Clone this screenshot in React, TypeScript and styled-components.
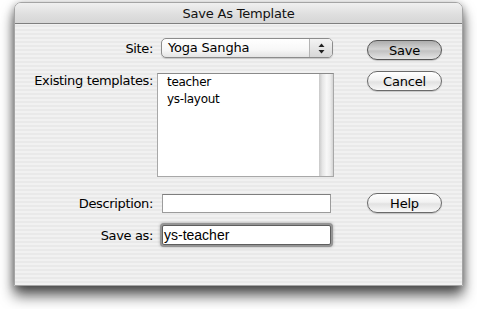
import React from "react";
import styled, { createGlobalStyle } from "styled-components";

const GlobalStyle = createGlobalStyle`
  html, body {
    margin: 0;
    padding: 0;
    background: #ffffff;
  }
  body {
    font-family: "DejaVu Sans", "Liberation Sans", sans-serif;
    color: #000000;
  }
`;

const Page = styled.div`
  width: 477px;
  height: 309px;
  padding: 2px 0 0 14px;
  box-sizing: border-box;
`;

const Window = styled.div`
  width: 449px;
  height: 284px;
  display: flex;
  flex-direction: column;
  border-radius: 7px 7px 0 0;
  border: 1px solid #a4a4a4;
  box-sizing: border-box;
  overflow: hidden;
  background: repeating-linear-gradient(
    to bottom,
    #f1f1f1 0px,
    #f1f1f1 2px,
    #e9e9e9 2px,
    #e9e9e9 4px
  );
  box-shadow: 0 10px 14px rgba(0, 0, 0, 0.62), 0 2px 8px rgba(0, 0, 0, 0.35);
`;

const TitleBar = styled.div`
  height: 20px;
  flex-shrink: 0;
  display: flex;
  align-items: center;
  justify-content: center;
  background: linear-gradient(to bottom, #f0f0f0, #dedede 60%, #d6d6d6);
  border-bottom: 1px solid #7e7e7e;
  font-size: 13px;
  letter-spacing: -0.2px;
  color: #111;
`;

const Form = styled.div`
  display: grid;
  grid-template-columns: 142px 210px 75px;
  grid-template-rows: 33px 122px 32px 20px;
  padding-top: 14px;
`;

const Label = styled.div<{ $top?: boolean }>`
  font-size: 13px;
  letter-spacing: -0.35px;
  text-align: right;
  padding-right: 4px;
  align-self: start;
  margin-top: ${(p) => (p.$top ? "1px" : "2px")};
  line-height: 17px;
  white-space: nowrap;
`;

const Popup = styled.div`
  margin-left: 4px;
  width: 172px;
  height: 20px;
  box-sizing: border-box;
  display: flex;
  border: 1px solid #8c8c8c;
  border-radius: 5px;
  overflow: hidden;
  background: linear-gradient(to bottom, #ffffff, #f7f7f7 60%, #e4e4e4);
  box-shadow: 0 1px 1px rgba(0, 0, 0, 0.15);
`;

const PopupText = styled.div`
  flex: 1;
  font-size: 13px;
  letter-spacing: -0.2px;
  line-height: 18px;
  padding-left: 6px;
`;

const PopupArrows = styled.div`
  width: 22px;
  border-left: 1px solid #b4b4b4;
  background: linear-gradient(to bottom, #f4f4f4, #d8d8d8);
  display: flex;
  align-items: center;
  justify-content: center;
`;

const ListBox = styled.div`
  margin-top: 2px;
  width: 177px;
  height: 104px;
  box-sizing: border-box;
  display: flex;
  border: 1px solid #a8a8a8;
  border-top-color: #8a8a8a;
  background: #ffffff;
`;

const ListItems = styled.div`
  flex: 1;
  padding: 0 0 0 9px;
  font-size: 12px;
  letter-spacing: -0.3px;
  line-height: 17px;
`;

const ScrollTrack = styled.div`
  width: 14px;
  background: linear-gradient(
    to right,
    #c8c8c8,
    #e6e6e6 25%,
    #f8f8f8 55%,
    #ededed 80%,
    #d4d4d4
  );
`;

const TextField = styled.div<{ $focused?: boolean }>`
  margin-left: 5px;
  margin-top: ${(p) => (p.$focused ? "0" : "1px")};
  width: 169px;
  height: ${(p) => (p.$focused ? "20px" : "19px")};
  box-sizing: border-box;
  background: #ffffff;
  border: 1px solid ${(p) => (p.$focused ? "#5e5e5e" : "#9c9c9c")};
  border-top-color: ${(p) => (p.$focused ? "#5e5e5e" : "#7e7e7e")};
  border-radius: ${(p) => (p.$focused ? "2px" : "0")};
  box-shadow: ${(p) =>
    p.$focused ? "0 0 0 2px #959595, 0 0 3px 2px rgba(0,0,0,0.3)" : "none"};
  font-family: "Liberation Sans", "DejaVu Sans", sans-serif;
  font-size: 14px;
  line-height: 18px;
  padding-left: 1px;
`;

const PillButton = styled.div<{ $default?: boolean }>`
  width: 75px;
  height: 20px;
  box-sizing: border-box;
  margin-top: ${(p) => (p.$default ? "2px" : "0")};
  display: flex;
  align-items: center;
  justify-content: center;
  border-radius: 10px;
  border: 1px solid ${(p) => (p.$default ? "#555555" : "#6a6a6a")};
  font-size: 13px;
  letter-spacing: -0.2px;
  color: #000;
  background: ${(p) =>
    p.$default
      ? "linear-gradient(to bottom, #acacac 0%, #d4d4d4 45%, #c2c2c2 55%, #e4e4e4 100%)"
      : "linear-gradient(to bottom, #ffffff 0%, #f2f2f2 45%, #e2e2e2 55%, #f8f8f8 100%)"};
  box-shadow: 0 1px 1px rgba(0, 0, 0, 0.18);
`;

const ButtonSlot = styled.div`
  align-self: start;
`;

const Arrows = () => (
  <svg width="7" height="11" viewBox="0 0 7 11">
    <path d="M3.5 0.5 L6.5 4 L0.5 4 Z" fill="#222" />
    <path d="M3.5 10.5 L6.5 7 L0.5 7 Z" fill="#222" />
  </svg>
);

export default function App() {
  return (
    <Page>
      <GlobalStyle />
      <Window>
        <TitleBar>Save As Template</TitleBar>
        <Form>
          <Label>Site:</Label>
          <div>
            <Popup>
              <PopupText>Yoga Sangha</PopupText>
              <PopupArrows>
                <Arrows />
              </PopupArrows>
            </Popup>
          </div>
          <ButtonSlot>
            <PillButton $default>Save</PillButton>
          </ButtonSlot>

          <Label $top>Existing templates:</Label>
          <div>
            <ListBox>
              <ListItems>
                <div>teacher</div>
                <div>ys-layout</div>
              </ListItems>
              <ScrollTrack />
            </ListBox>
          </div>
          <ButtonSlot>
            <PillButton>Cancel</PillButton>
          </ButtonSlot>

          <Label>Description:</Label>
          <div>
            <TextField />
          </div>
          <ButtonSlot>
            <PillButton>Help</PillButton>
          </ButtonSlot>

          <Label>Save as:</Label>
          <div>
            <TextField $focused>ys-teacher</TextField>
          </div>
          <div />
        </Form>
      </Window>
    </Page>
  );
}
